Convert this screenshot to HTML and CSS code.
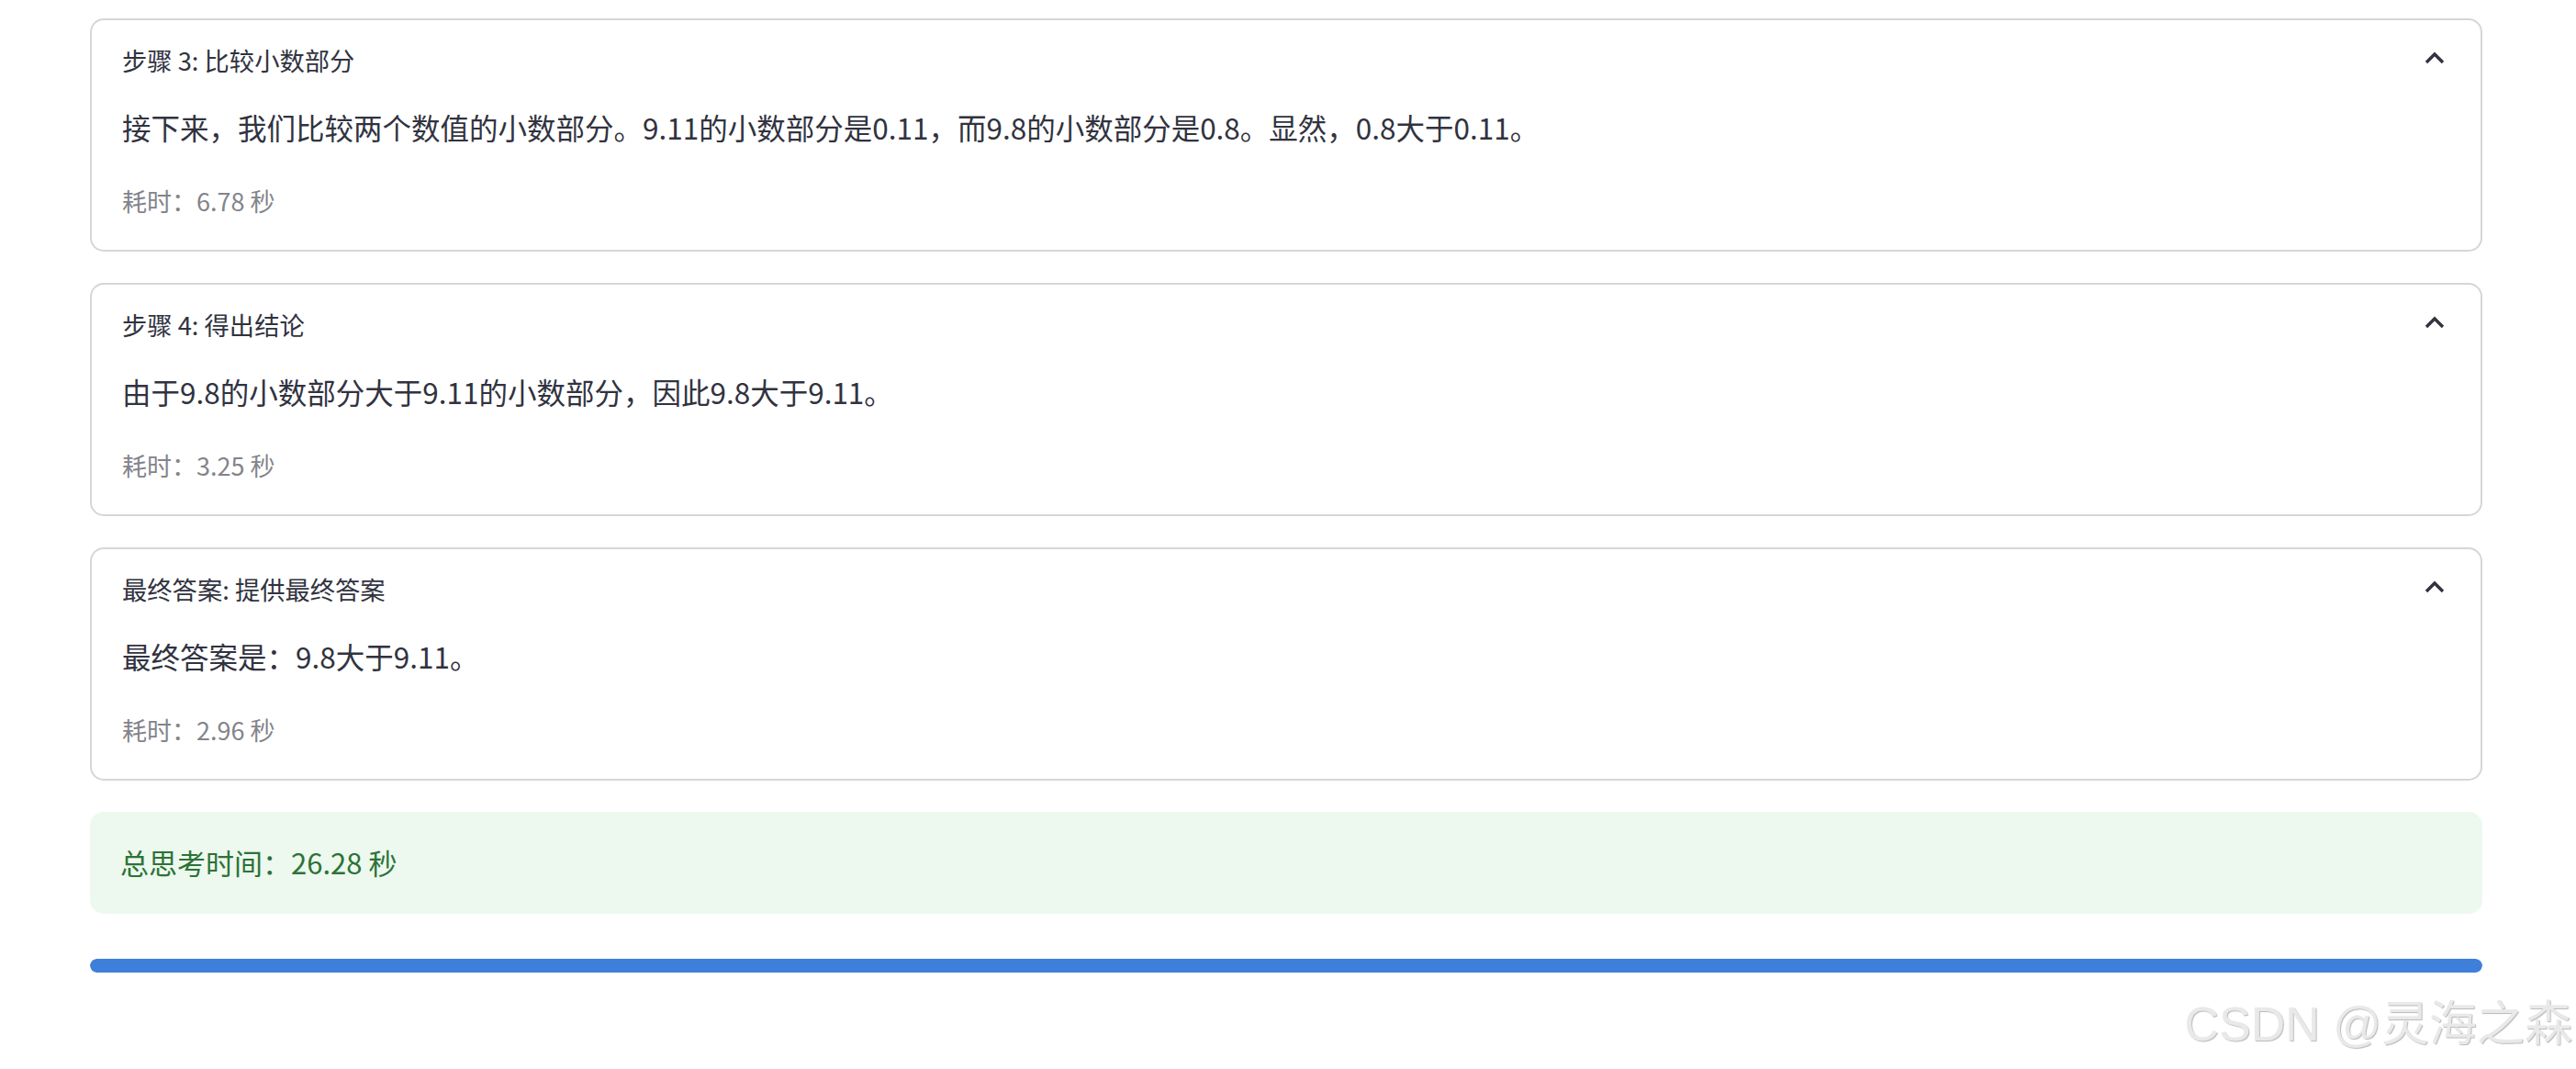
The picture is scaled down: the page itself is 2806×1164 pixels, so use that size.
FILE: index.html
```html
<!DOCTYPE html>
<html lang="zh-CN">
<head>
<meta charset="utf-8">
<title>思考步骤</title>
<link rel="stylesheet" href="styles.css">
</head>
<body>
<main class="page">
  <section class="card">
    <div class="card-head">
      <span class="card-title">步骤 3: 比较小数部分</span>
      <svg class="chev" viewBox="0 0 36 36" aria-hidden="true"><path d="M9 22 L18 13 L27 22" /></svg>
    </div>
    <p class="card-body">接下来，我们比较两个数值的小数部分。9.11的小数部分是0.11，而9.8的小数部分是0.8。显然，0.8大于0.11。</p>
    <p class="card-time">耗时：6.78 秒</p>
  </section>
  <section class="card">
    <div class="card-head">
      <span class="card-title">步骤 4: 得出结论</span>
      <svg class="chev" viewBox="0 0 36 36" aria-hidden="true"><path d="M9 22 L18 13 L27 22" /></svg>
    </div>
    <p class="card-body">由于9.8的小数部分大于9.11的小数部分，因此9.8大于9.11。</p>
    <p class="card-time">耗时：3.25 秒</p>
  </section>
  <section class="card">
    <div class="card-head">
      <span class="card-title">最终答案: 提供最终答案</span>
      <svg class="chev" viewBox="0 0 36 36" aria-hidden="true"><path d="M9 22 L18 13 L27 22" /></svg>
    </div>
    <p class="card-body">最终答案是：9.8大于9.11。</p>
    <p class="card-time">耗时：2.96 秒</p>
  </section>
  <div class="success">总思考时间：26.28 秒</div>
  <div class="progress"><div class="progress-fill"></div></div>
</main>
<div class="watermark">CSDN @灵海之森</div>
</body>
</html>
```
FILE: styles.css
```css
html, body {
  margin: 0;
  padding: 0;
  background: #ffffff;
}
body {
  font-family: "Noto Sans CJK SC", "Noto Sans", sans-serif;
  color: #31333f;
  width: 2806px;
  height: 1164px;
  overflow: hidden;
  position: relative;
}
.page {
  width: 2606px;
  margin-left: 98px;
  padding-top: 20px;
  display: flex;
  flex-direction: column;
  gap: 34px;
}
.card {
  border: 2px solid #d6d6d9;
  border-radius: 15px;
  padding: 0 32px 31px 33px;
  height: 254px;
  box-sizing: border-box;
}
.card-head {
  display: flex;
  align-items: center;
  justify-content: space-between;
  height: 43px;
  margin-top: 22px;
}
.card-title {
  font-size: 27.3px;
  line-height: 43px;
}
.chev {
  width: 36px;
  height: 36px;
  margin-top: -4px;
}
.chev path {
  fill: none;
  stroke: #31333f;
  stroke-width: 3.4;
}
.card-body {
  margin: 26px 0 0;
  font-size: 31.5px;
  line-height: 50px;
}
.card-time {
  margin: 34px 0 0;
  font-size: 27px;
  line-height: 43px;
  color: #83848b;
}
.success {
  background: #edf8ef;
  color: #2c7336;
  border-radius: 15px;
  padding: 30px 33px 31px;
  font-size: 31px;
  line-height: 50px;
}
.progress {
  margin-top: 15px;
  height: 15px;
  border-radius: 8px;
  background: #e6eaf1;
  overflow: hidden;
}
.progress-fill {
  width: 100%;
  height: 100%;
  background: #3e80d9;
  border-radius: 8px;
}
.watermark {
  position: absolute;
  right: 4px;
  top: 1083px;
  font-family: "Liberation Sans", "Noto Sans CJK SC", sans-serif;
  font-size: 52px;
  line-height: 64px;
  color: #e9e9e9;
  text-shadow: 1px 1px 1px rgba(0, 0, 0, 0.28);
  white-space: nowrap;
}
```
